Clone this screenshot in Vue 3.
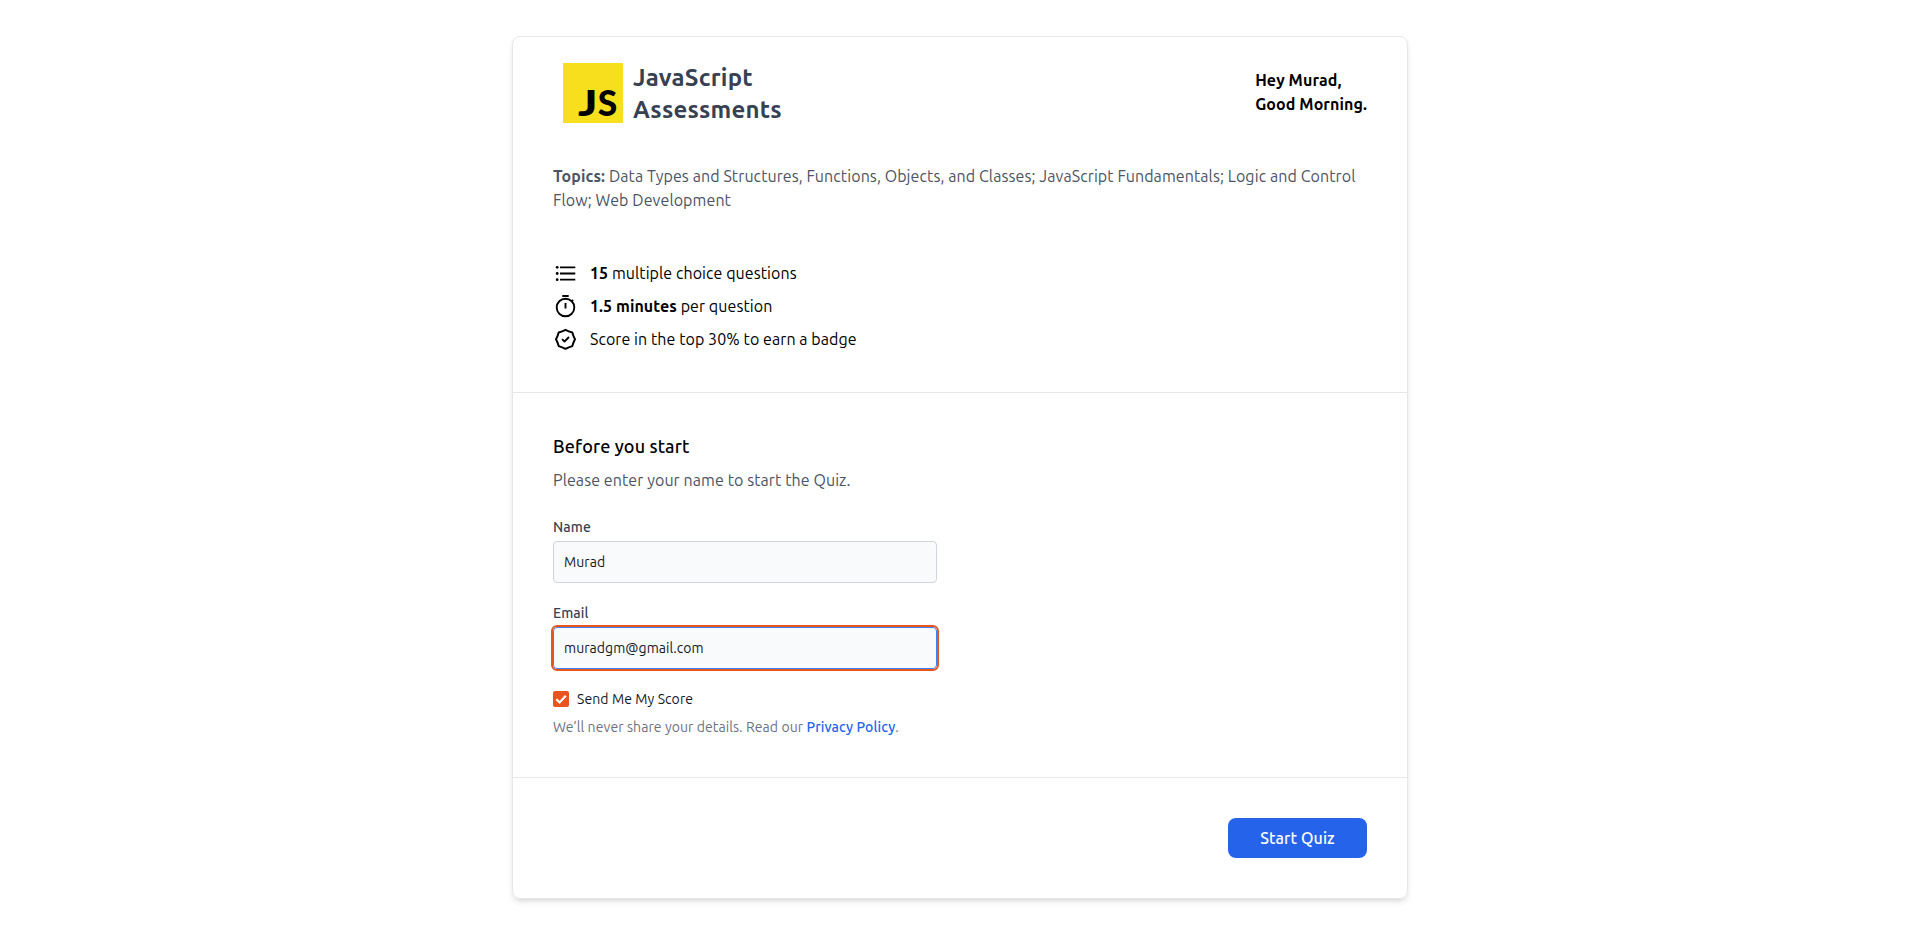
<script setup>
import { ref } from 'vue'

const name = ref('Murad')
const email = ref('muradgm@gmail.com')
const sendScore = ref(true)
</script>

<template>
  <main class="page">
    <form class="card" @submit.prevent>
      <section class="intro">
        <header class="head">
          <div class="brand">
            <svg class="logo" viewBox="0 0 60 60" aria-label="JS">
              <rect width="60" height="60" fill="#f7df1e" />
              <text x="14.9" y="53" textLength="19.5" lengthAdjust="spacingAndGlyphs">J</text>
              <text x="34.7" y="53" textLength="19.5" lengthAdjust="spacingAndGlyphs">S</text>
            </svg>
            <h1>JavaScript<br />Assessments</h1>
          </div>
          <p class="greeting">Hey Murad,<br />Good Morning.</p>
        </header>
        <p class="topics">
          <b>Topics:</b> Data Types and Structures, Functions, Objects, and Classes; JavaScript Fundamentals; Logic and Control
          Flow; Web Development
        </p>
        <ul class="facts">
          <li>
            <svg viewBox="0 0 24 24">
              <path d="M7 6.3h15.3M7 12.5h15.3M7 18.7h15.3" fill="none" stroke="#000" stroke-width="1.8" />
              <circle cx="4.2" cy="6.3" r="1.4" /><circle cx="4.2" cy="12.5" r="1.4" /><circle cx="4.2" cy="18.7" r="1.4" />
            </svg>
            <span><b>15</b> multiple choice questions</span>
          </li>
          <li>
            <svg viewBox="0 0 24 24" fill="none" stroke="#000" stroke-width="1.9">
              <circle cx="12.5" cy="13.5" r="8.8" />
              <path d="M9.3 2h6.4M12.5 9v5.5M18.4 7.6l1.7-1.7" />
            </svg>
            <span><b>1.5 minutes</b> per question</span>
          </li>
          <li>
            <svg viewBox="0 0 24 24" fill="none" stroke="#000" stroke-width="2" stroke-linejoin="round">
              <path transform="translate(.5 .3)" d="M12 2.5Q15.2 4.2 18.8 5.2 19.8 8.8 21.5 12 19.8 15.2 18.8 18.8 15.2 19.8 12 21.5 8.8 19.8 5.2 18.8 4.2 15.2 2.5 12 4.2 8.8 5.2 5.2 8.8 4.2 12 2.5z" />
              <path d="M9.1 12.1l2.4 2.4 4.5-4.5" stroke-width="1.8" />
            </svg>
            <span>Score in the top 30% to earn a badge</span>
          </li>
        </ul>
      </section>

      <section class="details">
        <h2>Before you start</h2>
        <p class="lead">Please enter your name to start the Quiz.</p>
        <div class="field">
          <label for="name">Name</label>
          <input id="name" v-model="name" type="text" />
        </div>
        <div class="field">
          <label for="email">Email</label>
          <input id="email" v-model="email" class="active" type="text" spellcheck="false" />
        </div>
        <label class="check">
          <input v-model="sendScore" type="checkbox" />
          <svg class="box" viewBox="0 0 16 16">
            <rect width="16" height="16" rx="2" fill="#e95420" />
            <path v-if="sendScore" d="M3.3 8.2l3.3 3.3 6.2-6.8" fill="none" stroke="#fff" stroke-width="2.2" />
          </svg>
          <span>Send Me My Score</span>
        </label>
        <p class="note">We’ll never share your details. Read our <a href="#">Privacy Policy</a>.</p>
      </section>

      <footer class="foot">
        <button type="submit">Start Quiz</button>
      </footer>
    </form>
  </main>
</template>

<style>
body {
  background: #fff;
}
</style>

<style scoped>
* {
  box-sizing: border-box;
}
h1, h2, p, ul {
  margin: 0;
  padding: 0;
}
.page {
  padding: 36px 0 34px;
  font: 400 16px/24px Ubuntu, "Noto Sans", sans-serif;
  letter-spacing: 0.088px;
  color: #000;
}
.card {
  width: 896px;
  margin: 0 auto;
  border: 1px solid #e5e7eb;
  border-radius: 8px;
  box-shadow: 0 4px 6px -1px rgba(0, 0, 0, 0.1), 0 2px 4px -2px rgba(0, 0, 0, 0.1);
}
.intro {
  padding: 24px 40px 41px;
}
.head {
  display: flex;
  justify-content: space-between;
  align-items: center;
  height: 64px;
}
.brand {
  display: flex;
  align-items: center;
  gap: 10px;
  padding-left: 10px;
}
.logo {
  display: block;
  width: 60px;
  height: 60px;
  letter-spacing: 0;
}
.logo text {
  font: 900 36px Lato, sans-serif;
}
h1 {
  padding-top: 2px;
  font-size: 24px;
  line-height: 32px;
  font-weight: 700;
  color: #374151;
  letter-spacing: 0.22px;
}
.greeting {
  padding-bottom: 2px;
  font-weight: 700;
  white-space: nowrap;
}
.topics {
  margin-top: 39px;
  color: #4b5563;
}
.facts {
  display: grid;
  gap: 9px;
  margin-top: 49px;
  list-style: none;
  letter-spacing: 0.07px;
}
.facts li {
  display: flex;
  align-items: center;
  gap: 13px;
}
.facts svg {
  width: 24px;
  height: 24px;
}
.details {
  padding: 39px 40px 40px;
  border-top: 1px solid #e5e7eb;
  border-bottom: 1px solid #e5e7eb;
}
h2 {
  font-size: 18px;
  line-height: 28px;
  font-weight: 500;
  letter-spacing: 0.14px;
}
.lead {
  margin-top: 8px;
  color: #4b5563;
}
.field {
  display: grid;
  gap: 4px;
  width: 384px;
  margin-top: 20px;
}
.lead + .field {
  margin-top: 25px;
}
.field label {
  font-size: 14px;
  line-height: 20px;
  font-weight: 500;
  color: #374151;
}
.field input {
  width: 100%;
  height: 42px;
  padding: 0 10px;
  border: 1px solid #d1d5db;
  border-radius: 4px;
  background: #f9fafb;
  color: #111827;
  font: 400 14px/20px Ubuntu, "Noto Sans", sans-serif;
  letter-spacing: 0.06px;
  outline: none;
}
.field input.active {
  border-color: #3b82f6;
  outline: 2px solid #e95420;
}
.check {
  display: flex;
  align-items: center;
  gap: 8px;
  width: max-content;
  margin-top: 20px;
  font-size: 14px;
  line-height: 20px;
  color: #111827;
}
.check input {
  position: absolute;
  opacity: 0;
}
.box {
  width: 16px;
  height: 16px;
}
.note {
  margin-top: 8px;
  font-size: 14px;
  line-height: 20px;
  color: #6b7280;
}
.note a {
  color: #2563eb;
  font-weight: 500;
  text-decoration: none;
  letter-spacing: 0.12px;
}
.foot {
  display: flex;
  justify-content: flex-end;
  padding: 40px;
}
button {
  width: 139px;
  height: 40px;
  padding: 0;
  border: 0;
  border-radius: 8px;
  background: #2563eb;
  color: #fff;
  font: 500 16px/24px Ubuntu, "Noto Sans", sans-serif;
  letter-spacing: 0.1px;
}
</style>
